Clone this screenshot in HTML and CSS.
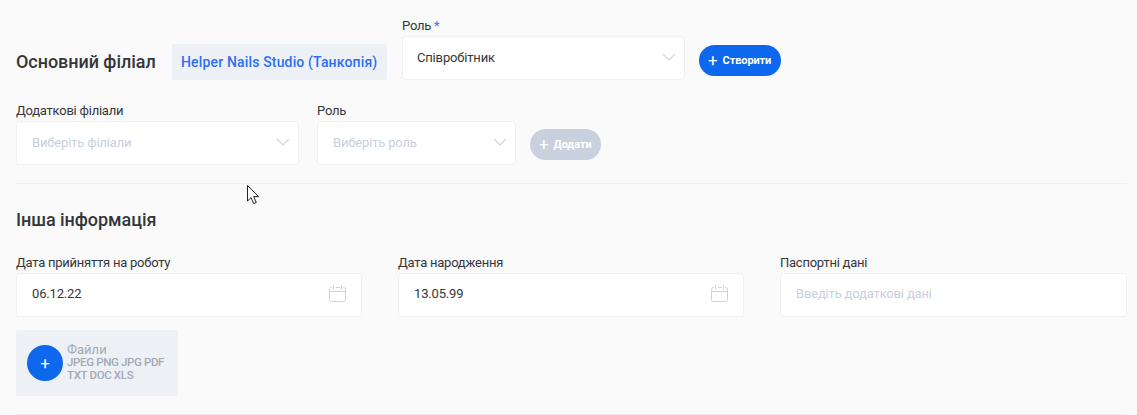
FILE: index.html
```html
<!DOCTYPE html>
<html lang="uk">
<head>
<meta charset="utf-8">
<title>Працівник</title>
<link rel="stylesheet" href="styles.css">
</head>
<body>
<main class="page">
  <section class="row row-main">
    <h2 class="title">Основний філіал</h2>
    <div class="branch">Helper Nails Studio (Танкопія)</div>
    <div class="field w-283">
      <label class="label">Роль <span class="req">*</span></label>
      <div class="control"><span class="value">Співробітник</span>
        <svg class="chev" viewBox="0 0 14 8"><path d="M1 1l6 6 6-6"/></svg></div>
    </div>
    <button class="btn btn-create"><span class="plus">+</span>Створити</button>
  </section>
  <section class="row row-extra">
    <div class="field w-283">
      <label class="label">Додаткові філіали</label>
      <div class="control ph"><span>Виберіть філіали</span>
        <svg class="chev" viewBox="0 0 14 8"><path d="M1 1l6 6 6-6"/></svg></div>
    </div>
    <div class="field w-199">
      <label class="label">Роль</label>
      <div class="control ph"><span>Виберіть роль</span>
        <svg class="chev" viewBox="0 0 14 8"><path d="M1 1l6 6 6-6"/></svg></div>
    </div>
    <button class="btn btn-add"><span class="plus">+</span>Додати</button>
  </section>
  <hr class="divider">
  <h2 class="title title-info">Інша інформація</h2>
  <section class="grid">
    <div class="field">
      <label class="label">Дата прийняття на роботу</label>
      <div class="control"><span class="value">06.12.22</span>
        <svg class="cal" viewBox="0 0 17 17"><path d="M3 2.5H2.5a2 2 0 0 0-2 2v10a2 2 0 0 0 2 2h12a2 2 0 0 0 2-2v-10a2 2 0 0 0-2-2H14M.5 6.5h16M4.5.5v4M12.5.5v4M7 2.5h4"/></svg></div>
    </div>
    <div class="field">
      <label class="label">Дата народження</label>
      <div class="control"><span class="value">13.05.99</span>
        <svg class="cal" viewBox="0 0 17 17"><path d="M3 2.5H2.5a2 2 0 0 0-2 2v10a2 2 0 0 0 2 2h12a2 2 0 0 0 2-2v-10a2 2 0 0 0-2-2H14M.5 6.5h16M4.5.5v4M12.5.5v4M7 2.5h4"/></svg></div>
    </div>
    <div class="field">
      <label class="label">Паспортні дані</label>
      <div class="control ph"><span>Введіть додаткові дані</span></div>
    </div>
  </section>
  <div class="files">
    <span class="files-add">+</span>
    <div class="files-text">
      <div class="files-title">Файли</div>
      <div class="files-types">JPEG PNG JPG PDF<br>TXT DOC XLS</div>
    </div>
  </div>
  <hr class="divider divider-end">
</main>
<svg class="cursor" viewBox="0 0 13 20"><path d="M.5.5v15.5l3.6-3.4 2.6 6 2.6-1.1-2.6-5.9h5z"/></svg>
</body>
</html>
```
FILE: styles.css
```css
* { box-sizing: border-box; }
html, body { margin: 0; height: 100%; overflow: hidden; }
body {
  background: #fafafa;
  font-family: Roboto, "Liberation Sans", sans-serif;
  color: #35363a;
  position: relative;
}
.page { padding: 18px 10px 0 16px; }
.row { display: flex; }
.row-main { align-items: flex-start; height: 62px; }
.row-extra { margin-top: 23px; gap: 18px; }
.title { margin: 0; font-size: 18px; line-height: 24px; font-weight: 500; letter-spacing: -0.05px; }
.row-main .title { margin-top: 32px; width: 156px; }
.branch {
  margin-top: 26px;
  height: 36px;
  padding: 0 10px 0 9px;
  border-radius: 3px;
  background: #edf0f4;
  color: #2e6ff2;
  font-size: 14px;
  font-weight: 500;
  letter-spacing: 0.16px;
  line-height: 36px;
  white-space: nowrap;
  width: 215px;
}
.row-main .field { margin-left: 15px; }
.row-main .control { padding-left: 14px; }
.field { display: flex; flex-direction: column; }
.w-283 { width: 283px; }
.w-199 { width: 199px; }
.label { font-size: 13px; letter-spacing: -0.24px; line-height: 15px; height: 18px; color: #35363a; }
.req { color: #3d6ff0; }
.control {
  height: 44px;
  background: #fff;
  border: 1px solid #f0f1f3;
  border-radius: 4px;
  padding: 0 15px 2px;
  display: flex;
  align-items: center;
  justify-content: space-between;
  font-size: 13px;
  letter-spacing: -0.17px;
}
.grid .control { padding-bottom: 4px; }
.value { color: #35363a; }
.ph { color: #c8d0dd; }
.chev { width: 14px; height: 8px; margin-right: -7px; fill: none; stroke: #cfd5df; stroke-width: 1.2; }
.cal { width: 17px; height: 17px; fill: none; stroke: #cbd3e0; stroke-width: 1; }
.btn {
  border: 0;
  border-radius: 16px;
  height: 31px;
  color: #fff;
  font-family: inherit;
  font-size: 11px;
  font-weight: 700;
  letter-spacing: -0.1px;
  display: flex;
  align-items: center;
  padding: 0 9px;
  white-space: nowrap;
}
.plus { font-size: 17px; font-weight: 400; margin-right: 5px; line-height: 1; }
.btn-create { background: #0d68ee; margin: 27px 0 0 14px; width: 82px; }
.btn-add { background: #cad1de; margin: 26px 0 0 -4px; width: 71px; }
.divider { border: 0; border-top: 1px solid #edeef0; margin: 18px 0 0; }
.title-info { margin-top: 24px; }
.grid { display: grid; grid-template-columns: 346px 346px 1fr; gap: 36px; margin-top: 23px; }
.files {
  margin-top: 13px;
  width: 162px;
  height: 66px;
  border-radius: 3px;
  background: #edf0f4;
  display: flex;
  align-items: center;
  padding-left: 11px;
}
.files-add {
  width: 36px;
  height: 36px;
  border-radius: 50%;
  background: #0d68ee;
  color: #fff;
  font-size: 17px;
  display: flex;
  align-items: center;
  justify-content: center;
  margin-right: 4px;
}
.files-text { color: #a3a9b6; line-height: 13px; padding-bottom: 2px; }
.files-title { font-size: 13px; }
.files-types { font-size: 11.5px; font-weight: 500; letter-spacing: -0.35px; }
.divider-end { margin-top: 18px; }
.cursor {
  position: absolute;
  left: 247px;
  top: 185px;
  width: 13px;
  height: 20px;
  fill: #fff;
  stroke: #222;
  stroke-width: 1;
}
```
